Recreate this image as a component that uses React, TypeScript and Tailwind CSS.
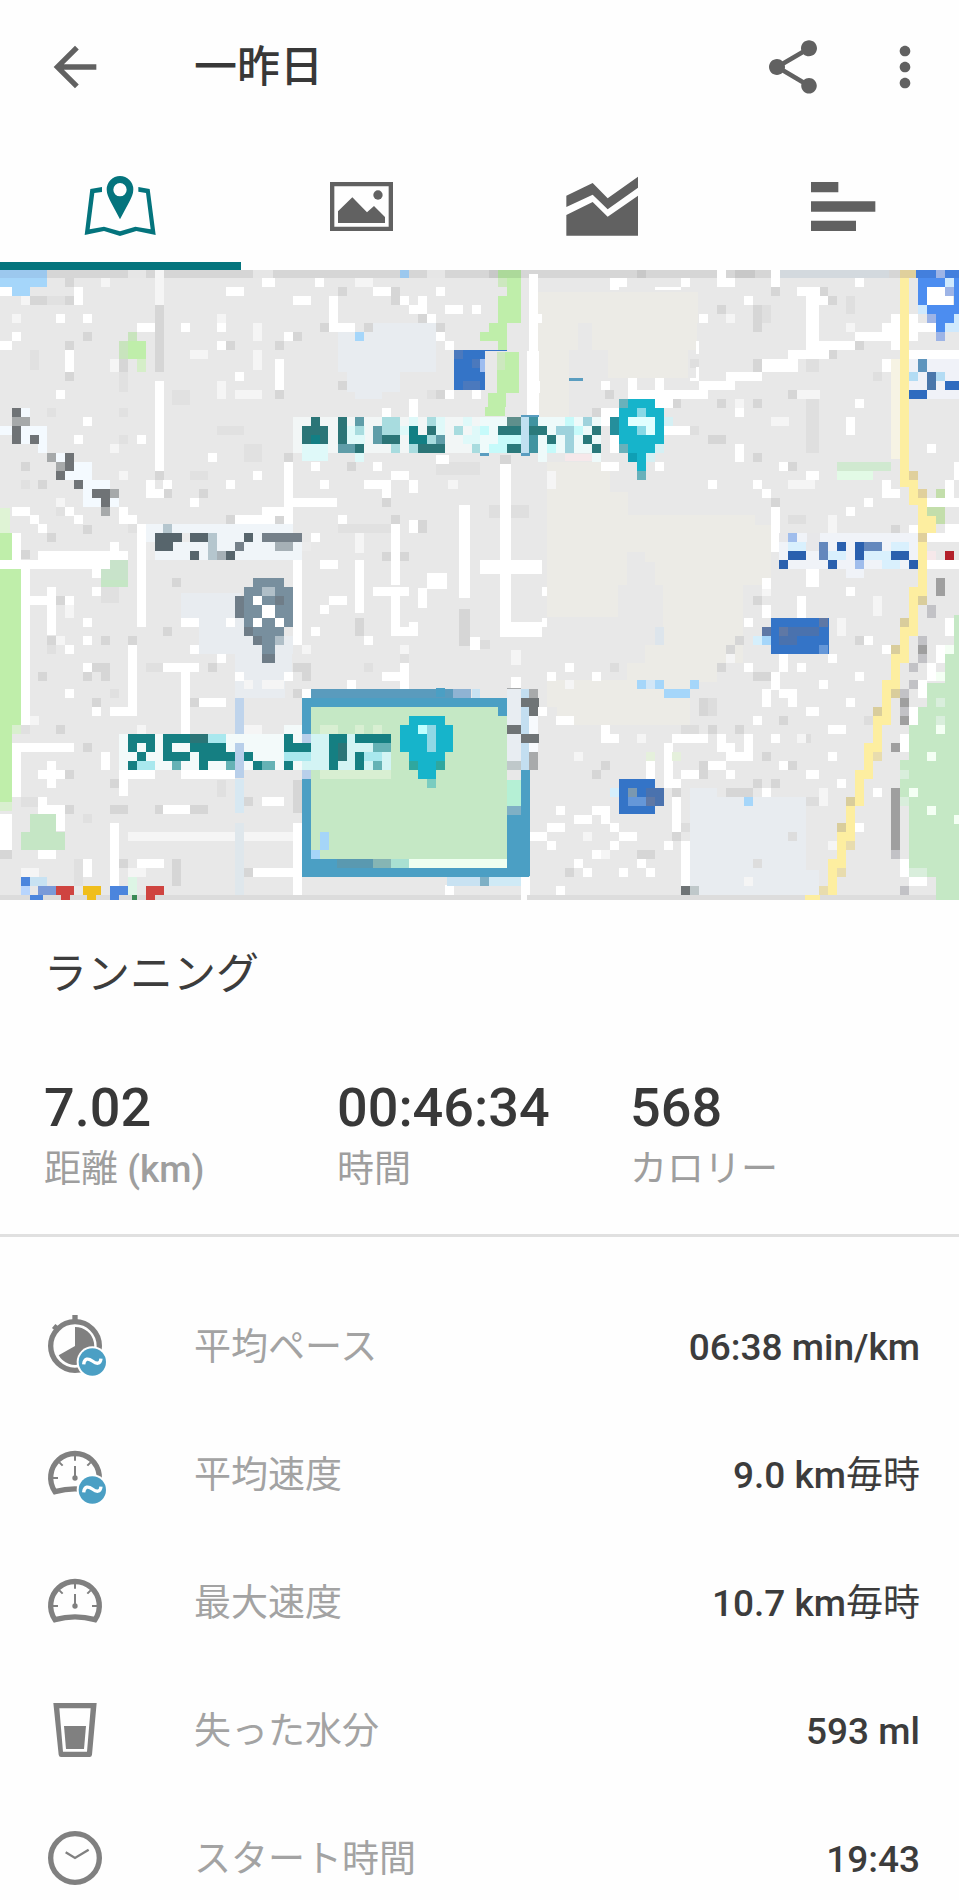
import { useState } from "react";
import type { ReactNode } from "react";
import { MdArrowBack, MdMoreVert, MdShare } from "react-icons/md";

type Layer = [fill: string, cells: string];

interface Tile {
  x: number;
  y: number;
  layers: Layer[];
}

// Each cell is "x,y[,width[,height]]" inside its tile, the size defaults to one 27 unit block.
const tiles: Tile[] = [
  {
    x: 0,
    y: -15,
    layers: [
      ["#e8ecf0", "1013,201,295,121 1120,175,190 1040,322,160,60 1066,376,80"],
      ["#e1e1e1", "142,94,54 89,255,27,60 357,322,27,60 517,376,54,45 651,483,80 571,617,54 732,537,54,54 1013,778,160 1308,590,132,40 142,430 357,430 357,510 1281,376 168,725 62,644 384,778"],
      ["#d6d6d6", "0,15,1440,25 195,94 62,94,80 249,201 465,121,27,201 195,228 195,322 357,282,27,40 825,228 825,376 878,201 678,228 959,175 1093,175 1174,67,27,54 1254,148 1308,175 1013,67 1013,349 1308,376 62,590 115,644 465,617 490,671 598,671 852,564 678,751 825,751 1040,590 1147,698 1174,751 1254,765,27,40 1147,860 1200,860 249,779 142,805 62,856 517,940 195,40"],
      ["#e6e6e6", "385,15,52,25 760,15,60,25 1281,15,54,25"],
      ["#f5f5f5", "35,148 303,40 330,282,27,40 758,175,27,54 758,255,27,60 571,255,54 651,349,27,54 705,376,80 357,617 330,537 1066,40,54 465,15,27,105 651,148 1345,644,30 168,698 1066,805,27,60 62,94"],
      ["#ffffff", "0,67,35 222,67,27,54 678,67,54 786,40,40 168,148 249,148 35,201 0,228,35 195,255,27,67 410,175,54 544,175 651,175 651,228 852,201 825,282,27,94 705,322 168,376 465,349,27,268 249,456 222,510 410,510 625,564 758,617 678,644 437,644,27,54 437,671,54 490,644 571,698 986,94,27,81 986,175,80 878,94,54 946,40 1120,67,54 1200,94 1254,94,27,54 1227,121,54 1281,148 1308,67 1335,121,54 1415,121 1308,201 1335,228 1415,376 1335,376 1227,403,27,54 1147,430"],
      ["#ffffff", "35,725 62,725 89,751 115,778 195,725 222,751 357,725 357,751,54 785,725,95 705,751,120 411,778,467 852,590,27,190 880,698,130 932,590 1120,590 959,644 1093,644,80 1147,671 1174,617,54 1227,644,27,40 1013,751 1227,765,27,40 1174,778,27,182 1376,720,34,240 1066,885,27,75 1281,925,60 878,885,27,75 932,805 959,885,54 1308,570,40"],
      ["#ffffff", "0,885,385 115,858,270 330,832 35,805,27,80 62,912,27,48 411,778,27,182 276,912"],
      ["#a5d6fa", "0,40,142 35,67,54 1066,201"],
      ["#9cc8ee", "0,15,142,25 1200,15,27,25"],
      ["#bfeeaa", "384,228,54,54 0,805,35,80 0,912,62,48"],
      ["#dff3d5", "0,730,30,75"],
      ["#c8e4bd", "384,201 357,228,27,54"],
      ["#d5eec8", "410,282,27,40"],
      ["#c8e3ca", "330,885,54,75 303,912,27,48"],
      ["#3474c7", "1362,255,78,121"],
      ["#4b79bd", "1362,255 1388,349,54 1415,282"],
      ["#f4faff", "62,430 62,483,80,54 0,483,35 115,537 168,564 195,617,80 222,590,54,54 249,644,80 249,671,27,54 276,698 330,698"],
      ["#6f7376", "35,430 35,483,27,54 89,510 195,564,27,54 168,617 222,644 276,671,54 303,698"],
      ["#a6a9aa", "35,456,54 142,564 168,590 330,671 303,725"],
      ["#f2f6f6", "878,456,562,108"],
      ["#dff9f9", "905,537,80,50 1040,483,54,54 1200,483 1227,456 1308,456,27,54 1388,456 1415,483 1388,510,52 1066,564"],
      ["#a8dcdf", "1147,456,54,54 1066,483 1281,510 1227,537 1362,483 1415,537 1281,456 1174,537"],
      ["#5f9da8", "1013,537,54 1120,483,27,54 1308,510 1066,456"],
      ["#2b7577", "905,483,80,54 932,456 1013,456,27,81 1066,537 1147,510,54 1254,510,27,54 1281,483 1281,537,54"],
      ["#127f84", "932,510 1227,483,27,54 1254,510"],
      ["#f0f5f9", "437,778,441 437,805,468,81"],
      ["#ebebeb", "437,832,27,54 545,805,27 905,832"],
      ["#57656c", "465,805,80 465,832,54 571,805,54 571,858 678,858 732,805"],
      ["#758089", "785,805,120 705,832"],
      ["#a6b0b6", "825,832,54 651,858"],
      ["#b5c6ce", "624,805,27,80 490,778"],
      ["#788f9e", "758,938,95,22"],
    ],
  },
  {
    x: 1440,
    y: -15,
    layers: [
      ["#ecebe6", "174,80,480,95 174,175,120,80 174,255,94,200 335,175,315,80 385,255,240,85 200,590,190,160 390,680,54,70 200,750,625,210 825,779,47,181"],
      ["#e8e8e8", "440,860,54,100 494,890,30,70"],
      ["#dfdfdf", "978,403,40,160 28,720,120,40 845,121,27,54 1099,94,27,54 978,282,40,40 925,751,54 551,456,27 630,483,27 1180,322 630,282"],
      ["#d6d6d6", "0,15,1437,25 818,282,27,40 818,121,27,81 711,121 872,67 1018,67 1045,94 1045,255 1126,228 577,403 711,403 684,510,54 818,403 925,376 818,564 925,590 60,570,32 872,698 1233,779 335,430 376,376 60,740,32"],
      ["#c8c8c8", "28,15,27,25 470,15,27,25 765,15,60,25"],
      ["#d3d9de", "898,15,330,25"],
      ["#f5f5f5", "952,376,67 925,644,80 738,148 765,403 202,617,27,54 872,456,54 1045,751,27,54 1394,698 1099,175"],
      ["#f6f3e4", "1233,282,27,300"],
      ["#ffffff", "148,28,27,230 175,148,10 142,258,34,192 175,349,4,35 390,40,27,35 417,40,25 524,67,80,8 604,40 711,15,27,52 738,40 872,15,27,50 792,94 657,148 952,67,67 978,94,40,161 1018,94 1126,40 577,376,108 657,349,108 738,322,108 845,282,108,40 925,255,122 1018,228,108 1126,201,110 1206,175,50 1233,148,27,107 1286,148,27,80 1313,175,54 1286,255,151 647,228,10,40 647,305,10,43 630,340,27,8"],
      ["#ffffff", "444,340,27,36 524,340,27,36 362,349 444,376,80 524,376,54,54 362,430,54,54 390,510,27,54 1206,282,27,40 765,430 551,483,80 765,537,27,54 1099,456,27,54 1126,403 898,590 1340,537 1421,590,16,54 684,644 818,644 845,671 872,725,27,135 978,617,40 1206,644,27,54 1233,671 1153,698 1099,725 60,598,32,362 0,886,186,40 845,938 978,910,40,50 362,590,54 444,564 524,590 1394,644,27,54 1340,698,97 1286,779 1340,805,97,27 1340,885,97 1394,778,43"],
      ["#cde8bf", "55,40,27,27 50,262,27,54"],
      ["#acd99a", "55,15,67,25"],
      ["#bfeeaa", "82,40,40,135 55,94,27,81 28,175,54 0,201,82 55,228 76,262,40,123 50,316,27,70 23,385,54,40 15,425,60"],
      ["#3474c7", "0,255,15,121 0,255,80,3"],
      ["#9dbdf0", "0,282,15,40"],
      ["#5a9dc0", "267,338,42,11"],
      ["#fdeea0", "1260,15,27,650 1286,644,27,75 1313,698,27,108 1340,751,27,54 1313,832,27,128"],
      ["#e0d09c", "1286,617 1313,671 1313,805 1260,15,50,25"],
      ["#4c8df0", "1313,40,124 1313,67,27,54 1421,67,16,54 1340,121,97 1367,148,54 1367,175"],
      ["#437fdd", "1308,15,129,25"],
      ["#ffffff", "1340,67,80,54"],
      ["#cfe9fd", "1394,40 1313,121 1394,175,43 1421,148,16"],
      ["#9db4e6", "1394,67 1340,148 1367,201 1367,15,27,25"],
      ["#f0f2f8", "1286,282,151,94 1340,376,97"],
      ["#b3dcf4", "1286,322 1367,322"],
      ["#5f95bd", "1313,282,27,40"],
      ["#4a77ab", "1340,322,27,54"],
      ["#2e6bbf", "1394,349,43 1286,376,54"],
      ["#d0e9d0", "1072,590,161"],
      ["#e2fae6", "1072,617,108"],
      ["#c3deab", "1340,725,54 1367,671 1367,751"],
      ["#eefafa", "0,456,362,108 174,564,28 335,564"],
      ["#c6fafa", "55,510,67 28,537,54 0,483 256,456 283,483 202,537,27"],
      ["#c0e0f0", "122,456,27,108"],
      ["#9ed2dc", "229,483 256,483 256,510,27,54 308,456"],
      ["#5a9dc0", "0,564,28,10 122,564,27,10 122,450,54,6"],
      ["#5f8f8c", "82,456,40"],
      ["#4093a0", "148,456,27,27 148,510,27,54"],
      ["#2a797b", "55,483,67 82,537,40 148,483,54 200,510 335,483 308,510 335,537"],
      ["#d5f0f4", "551,456 497,564 524,537"],
      ["#69b1bb", "417,403 417,537 471,617"],
      ["#258f9c", "390,456,27,54"],
      ["#16b4cb", "444,403,80 417,430,134,107 444,537,80 471,564,27,54"],
      ["#0f9fb5", "444,564"],
      ["#88d9e6", "471,430 471,483"],
      ["#e0ffff", "444,456,80 497,483"],
      ["#f0f3f8", "898,805,415,108 1099,913,54 1180,805,54"],
      ["#e7e7e9", "979,832,40 980,805,40,27 898,805,27"],
      ["#d9f0fd", "925,832,54 1045,858,54 1153,858,80 1233,832,54 1206,885,54"],
      ["#a0bdec", "925,805 1126,885"],
      ["#6488bd", "1018,832,27,54 1153,832,54"],
      ["#2a60ae", "925,858,54 898,885 1045,885 1072,832 1126,832,27,54 1233,858,54 1286,885"],
      ["#f6e8ea", "1340,858 256,567,80,20"],
      ["#b3202a", "1394,858"],
      ["#9f9f9f", "1367,938"],
    ],
  },
  {
    x: 0,
    y: 930,
    layers: [
      ["#e8ecf0", "544,40,180,74 598,114,135,54 598,168,280,54 705,222,170,53 705,275,150,80"],
      ["#e0e0e0", "303,20,54,50 437,248,54 330,328 142,195 62,435 62,650,80,30 249,702 384,328 598,515 651,600,27,50 222,837,27,80 1200,222 1093,248"],
      ["#d6d6d6", "249,275 276,248,54 303,168 142,168 115,275 168,47 384,168 490,140 303,275 878,248,54 905,275 878,328 276,355 249,490 195,570 330,675,54 464,675 195,675 571,675,54 732,650 330,598 0,810,35 357,837 517,837,27,80 705,864,54 1066,114,27,54 1376,87,34,110 571,355 625,248 168,435 878,600,27,100"],
      ["#f5f5f5", "195,74,27,40 89,408 411,435 732,435,54 410,490 384,755,494 384,864,54 785,301,67 62,864,54 1200,195 905,195 168,168 732,301"],
      ["#ffffff", "62,0,27,435 89,47,54 142,20,27,145 410,0,27,140 276,20 195,47 249,114 249,168 195,195 249,248 195,328 384,195,27,212 330,380,80 276,380 490,248,107 544,275,27,187 598,355,80 571,195 651,222 705,275 678,114 544,114,54 852,275 878,0,27,195 905,328 1066,0,27,100 1120,20,108 1174,20,27,147 1174,140,80 1227,127 1254,25,27,60 1281,0,60 1376,0,34,55 986,47,54 959,74 932,140 1093,168 1200,248,27,80 1147,275,54 1040,301 1410,170,30,40"],
      ["#ffffff", "62,490,160 35,490,27,160 357,462,27,187 142,544,27,80 115,570,80 303,515,27,54 115,650 115,675,80 168,700,27,54 0,702,35,108 330,730,27,230 490,675,80 785,650,67 411,837,80 249,837,27,54 878,730,27,230 758,864,120 1335,915,27,30 115,810,54 544,569,160 384,569,80"],
      ["#bfeeaa", "0,0,62,435 0,435,35,230"],
      ["#d9efcf", "0,665,35 35,435"],
      ["#c5e6c5", "89,702,80,54 62,756,133,54 303,0,80,20"],
      ["#bfd4ec", "705,355,27,107"],
      ["#d7e8f2", "705,598,27,102"],
      ["#dfe7ec", "705,730,27,215"],
      ["#788f9e", "758,0,94,20 732,20,147,120 732,140,120 758,167,67 785,194,40,52"],
      ["#6f7d88", "705,47,27,67 732,140 758,167 785,222,40 825,47"],
      ["#b0bfc8", "785,20,40 825,168"],
      ["#ffffff", "758,47 785,74,40,40 758,114 825,114"],
      ["#5a9bbd", "932,328,428"],
      ["#8fb3d3", "1360,328,54"],
      ["#c8e2f2", "1415,328,25 1340,890,100 80,890,60"],
      ["#c5e8c5", "932,382,508,455"],
      ["#4b9fc4", "905,355,535 905,380,27,510 932,837,80 905,864,535 1308,325"],
      ["#5a99b0", "1012,837,108"],
      ["#86b5b4", "1120,837,54"],
      ["#a9e0d2", "1174,837,54"],
      ["#effff0", "1227,837,213"],
      ["#a5d5f8", "959,757,27,54 932,810"],
      ["#f3fafa", "357,462,548,107 852,435,53"],
      ["#d3f4f4", "905,462,268,107"],
      ["#d8efd2", "959,435,54 1066,435 1120,435 959,569,214"],
      ["#a9e8ee", "625,462,54 410,542,54 852,515,80 1093,515,54"],
      ["#b8cfea", "705,489,27,105 905,569 905,462"],
      ["#65b2b5", "678,542,27 785,542,40 517,515,27,54 1120,489,54 1120,542"],
      ["#157f82", "384,462,80 384,489 437,489 410,515 384,542 490,462,27,80 517,462,54 517,515,54,27 571,489,27,27 598,489,27,80 625,489,54 625,515,80 732,515 758,542 852,462 852,489,80 852,542 986,462,54,54 986,515,27,54 1066,462,107 1066,515,27,54"],
      ["#2b7577", "571,462,54 1013,489,27,54"],
      ["#16b4cb", "1227,408,107 1200,435,160,80 1227,515,107 1254,542,54,54"],
      ["#2fa79f", "1227,542 1308,542"],
      ["#7accc0", "1281,596"],
      ["#c0ffff", "1254,435"],
      ["#90d8e5", "1281,435,27,80"],
      ["#dcdcdc", "0,945,1440,15"],
      ["#ddf5e5", "384,890,27,54"],
      ["#4b85dd", "62,890 330,917,54 89,945,40,14 330,945,27,14"],
      ["#b8d5fd", "62,917"],
      ["#7a9ad8", "115,917,54"],
      ["#cf4440", "168,917,54 182,944,27,15 437,917,54 437,944,27,15"],
      ["#f0be1c", "249,917,54 262,944,27,15"],
      ["#3a8a55", "397,944,13,15"],
    ],
  },
  {
    x: 1440,
    y: 930,
    layers: [
      ["#ecebe6", "200,0,215,110 550,0,240,250 494,195,216,110 440,250,270,50 200,300,430,80 230,380,400,54"],
      ["#e8ecf0", "630,623,80 630,650,348,295 978,870,40,75"],
      ["#dddddd", "684,355,27,54 0,180,30 604,435,54,30 965,462 470,462 604,730 925,757 818,837 978,650,40 1153,408 390,248 0,945,1437,15"],
      ["#d6d6d6", "765,168 738,195 711,248 818,275,54 818,47 898,408 657,355,27,54 765,435 845,515 657,542,27,54 362,542 335,569 738,623,80 872,596 577,757 470,810,54 256,864 1126,168 818,596 684,435 925,542 577,623"],
      ["#f5f5f5", "92,210,32,45 1180,47,27,60 256,301 282,515 1072,114,27,54 738,222 470,462 1018,623,27,54 792,890 308,757 1045,784 362,810 952,462 845,20"],
      ["#ffffff", "60,0,32,170 92,127,95,43 186,20,15 186,114,15 845,0 845,74,27,40 952,47,27,67 1099,20 978,0,40,20 792,114 1153,168 1206,195 1045,222 898,222,27,54 952,248 792,248 872,275,27,54 1126,275 1018,301 845,328,27,54 898,328,54 925,355 1099,355 978,382,40 818,408 792,462,27,54 872,462 1045,435,54 256,248 202,275 335,275 229,408,54 362,435 362,462,54 577,462,108 551,489,27,135 577,596 604,569,54 711,462,27,54 738,489,27,54 765,515,54 684,542,54 738,569 898,542 978,569,40 1045,515 1072,596 845,623 92,290,32,36"],
      ["#ffffff", "577,650,27,107 604,784,27,133 229,677 335,677,54 282,704,54 362,704 202,730,54 148,757,54 202,784 390,730 417,757,54 390,784 551,784 335,810 282,837 308,864 470,837 497,864 417,864 229,917 122,890,27,54 1126,730 497,542,27,54 1180,623 1394,114,27,54 1367,195,27,54 1340,248,27,54 1313,301,27,54 1286,382,27,54 1260,462,27,54 1260,837,27,54 1286,890,54 148,382,54 122,945,20,15"],
      ["#c5e8c5", "1421,105,16,120 1394,222,43,90 1340,310,97,74 1313,382,124,54 1286,435,151,105 1260,540,27,110 1286,540,151,325 1340,864,97,27 1367,890,70,70"],
      ["#d9eedc", "1367,355 1367,408 1286,864,54 1260,650 1260,569"],
      ["#f4fff4", "1367,435 1340,515 1286,623 1340,677 1421,704,16 1367,275 1394,195"],
      ["#e5f0dc", "497,515 577,515"],
      ["#fdeea0", "1313,0,27,47 1286,20,27,148 1260,141,27,107 1233,222,27,107 1206,301,27,135 1180,408,27,108 1153,489,27,108 1126,569,27,108 1099,677,27,108 1072,757,27,108 1045,837,27,108 1018,917,54 975,944,45,15"],
      ["#d9cd9c", "1313,47 1260,114 1233,195 1233,328 1180,382 1099,650 1072,730"],
      ["#e8dcae", "1180,515 1099,784 1072,864 1018,917"],
      ["#fdeea0", "1126,569,54 1126,650 1286,47"],
      ["#9f9f9f", "1367,0,27,47 1313,195 1260,355 1260,408 1233,489 1233,623,27,187"],
      ["#c2c2c6", "1340,74,27,40 1313,168 1313,222 1286,248 1286,301 1260,328 1260,382 1233,810 1260,917"],
      ["#3474c7", "872,114,174,107 417,596,107,107"],
      ["#4a72ae", "898,141,120 898,168,54 524,623,27,54 497,623"],
      ["#5f78a5", "898,141 1018,114 497,650 845,141"],
      ["#7a98b0", "444,623"],
      ["#6597d8", "1018,195 444,650,54"],
      ["#d5effc", "818,168 390,623"],
      ["#a5d6fa", "845,168 470,301 524,301 630,301 551,328,80 792,650"],
      ["#d2e6f6", "497,301"],
      ["#dde5ec", "524,141,27,54"],
      ["#c5e8c5", "0,382,82,455"],
      ["#effff0", "0,837,82"],
      ["#e8edf2", "82,328,40,241"],
      ["#c3def0", "122,328,27,241"],
      ["#f7fafd", "148,408,27,54 148,489"],
      ["#4b9fc4", "0,355,80 55,382 122,569,27,320 82,704,40,186 0,864,148"],
      ["#b5f0d5", "82,600,40,77"],
      ["#7fb0c5", "82,677,40 0,890,28"],
      ["#cfeaf6", "28,890,94"],
      ["#6f7476", "122,355,54 148,382 82,435,40 122,462,54 604,917"],
      ["#a8aaab", "148,328 148,515,27,54 82,325,40,3"],
      ["#bfc8ca", "630,917 82,542,40"],
    ],
  },
];

function toPath(cells: string) {
  return cells
    .split(" ")
    .map((cell) => {
      const [x, y, w = 27, h = 27] = cell.split(",").map(Number);
      return `M${x} ${y}h${w}v${h}h${-w}z`;
    })
    .join("");
}

function RouteMap() {
  return (
    <svg
      viewBox="0 0 2877 1889"
      shapeRendering="crispEdges"
      role="img"
      aria-label="Map"
      className="block h-auto w-full bg-[#e8e8e8]"
    >
      {tiles.map((tile) => (
        <g key={`${tile.x}:${tile.y}`} transform={`translate(${tile.x} ${tile.y})`}>
          {tile.layers.map(([fill, cells], i) => (
            <path key={i} fill={fill} d={toPath(cells)} />
          ))}
        </g>
      ))}
    </svg>
  );
}

const tabs: { id: string; icon: ReactNode }[] = [
  {
    id: "Map",
    icon: (
      <svg viewBox="253 528 216 180" className="h-[60px] w-[72px]" fill="currentColor">
        <path d="M307 561 272 567 255 705 313 693 361 708 410 693 468 705 450 567 416 561v14l23 4 14 109-46-8-46 14-48-14-43 8 14-109 23-3z" />
        <path
          fillRule="evenodd"
          d="M361 528a40 40 0 0 0-40 40c0 14 6 26 12 37l28 53 28-53c6-11 12-23 12-37a40 40 0 0 0-40-40zm0 21a20 20 0 1 1 0 40 20 20 0 0 1 0-40z"
        />
      </svg>
    ),
  },
  {
    id: "Photos",
    icon: (
      <svg viewBox="990 545 189 147" className="h-[49px] w-[63px]" fill="currentColor">
        <path fillRule="evenodd" d="M990 545h189v147H990zm13 13v121h163V558z" />
        <path d="M1014 633 1057 591 1101 636 1122 617 1155 650V668H1014z" />
        <circle cx="1134" cy="584" r="14" />
      </svg>
    ),
  },
  {
    id: "Charts",
    icon: (
      <svg viewBox="260 528 216 180" className="h-[60px] w-[72px]" fill="currentColor">
        <path d="M261 587 340 549 385 595 476 530V563L385 628 340 584 261 621z" />
        <path d="M261 645 340 606 385 650 476 587V707H261z" />
      </svg>
    ),
  },
  {
    id: "Splits",
    icon: (
      <svg viewBox="995 545 195 147" className="h-[49px] w-[65px]" fill="currentColor">
        <path d="M995 545h82v31h-82zM995 603h193v31H995zM995 661h135v31H995z" />
      </svg>
    ),
  },
];

function AverageBadge() {
  return (
    <>
      <circle cx="52" cy="48" r="47" fill="#fff" stroke="none" />
      <circle cx="52" cy="48" r="41" fill="#4b9fc4" stroke="none" />
      <path d="M26 55C28 36 40 36 52 45S76 56 78 38" stroke="#fff" strokeWidth="10" />
    </>
  );
}

function RowIcon({ children }: { children: ReactNode }) {
  return (
    <svg
      viewBox="-96 -96 192 192"
      fill="none"
      stroke="#808080"
      strokeWidth="16"
      className="h-16 w-16 shrink-0"
      aria-hidden="true"
    >
      {children}
    </svg>
  );
}

function Gauge() {
  return (
    <>
      <path d="M-60 53A73 73 0 1 1 60 53Q0 36-60 53z" />
      <path
        strokeWidth="6"
        d="M0-56V-40M-66 12H-51M66 12H51M-47-35-37-25M47-35 37-25M0-24V12"
      />
      <circle cx="0" cy="12" r="8" fill="#808080" stroke="none" />
    </>
  );
}

interface Stat {
  value: string;
  label: string;
  unit?: string;
}

const stats: Stat[] = [
  { value: "7.02", label: "距離", unit: "(km)" },
  { value: "00:46:34", label: "時間" },
  { value: "568", label: "カロリー" },
];

interface Detail {
  label: string;
  value: string;
  suffix?: string;
  icon: ReactNode;
}

const details: Detail[] = [
  {
    label: "平均ペース",
    value: "06:38 min/km",
    icon: (
      <>
        <circle r="73" />
        <path d="M0-93V-74M-64-60-52-50" />
        <path fill="#808080" stroke="none" d="M0 0V-57A57 57 0 1 1-49 28z" />
        <AverageBadge />
      </>
    ),
  },
  {
    label: "平均速度",
    value: "9.0 km",
    suffix: "毎時",
    icon: (
      <>
        <Gauge />
        <AverageBadge />
      </>
    ),
  },
  { label: "最大速度", value: "10.7 km", suffix: "毎時", icon: <Gauge /> },
  {
    label: "失った水分",
    value: "593 ml",
    icon: (
      <g fill="#808080" stroke="none">
        <path
          fillRule="evenodd"
          d="M-65-81H65L51 74Q50 81 44 81H-42Q-48 81-49 74zM-47-65-36 65H36L47-65z"
        />
        <path d="M-33-12H33L27 57H-27z" />
      </g>
    ),
  },
  {
    label: "スタート時間",
    value: "19:43",
    icon: (
      <>
        <circle r="73" />
        <path strokeWidth="7" d="M-28-17 0 0 41-25" />
      </>
    ),
  },
];

export default function App() {
  const [active, setActive] = useState("Map");

  return (
    <main
      lang="ja"
      className="min-h-screen overflow-x-hidden bg-[#fefefe] font-[Roboto,'Noto_Sans_CJK_JP',sans-serif] text-[#3c3c3c]"
    >
      <header className="flex h-[134px] items-center pr-[22px] pl-[43px] text-[#616161]">
        <button type="button" aria-label="Back">
          <MdArrowBack size={64} />
        </button>
        <h1 className="ml-[87px] flex-1 text-[43px] leading-16 font-medium text-[#383838]">一昨日</h1>
        <button type="button" aria-label="Share">
          <MdShare size={64} />
        </button>
        <button type="button" aria-label="More" className="ml-12">
          <MdMoreVert size={64} />
        </button>
      </header>

      {/* The strip runs slightly past the right edge */}
      <nav role="tablist" className="grid h-[136px] w-[100.5%] grid-cols-4">
        {tabs.map((tab) => (
          <button
            key={tab.id}
            type="button"
            role="tab"
            aria-label={tab.id}
            aria-selected={active === tab.id}
            onClick={() => setActive(tab.id)}
            className={`flex items-center justify-center border-b-8 pt-4 ${
              active === tab.id ? "border-[#04747d] text-[#04747d]" : "border-transparent text-[#616161]"
            }`}
          >
            {tab.icon}
          </button>
        ))}
      </nav>

      <RouteMap />

      <section className="border-b-3 border-[#e0e0e0] pt-[42px] pr-9 pb-9 pl-11">
        <h2 className="text-[43px] leading-16">ランニング</h2>
        <dl className="mt-[70px] grid grid-cols-3">
          {stats.map((stat) => (
            <div key={stat.label} className="flex flex-col-reverse">
              <dt className="pt-0.5 text-[37px] leading-14 text-[#9e9e9e]">
                {stat.label}
                {stat.unit && <span className="font-medium"> {stat.unit}</span>}
              </dt>
              <dd className="text-[54px] leading-16 font-medium text-[#383838]">{stat.value}</dd>
            </div>
          ))}
        </dl>
      </section>

      <dl className="flex flex-col gap-12 pt-[69px] pr-[39px] pl-[43px]">
        {details.map((row) => (
          <div key={row.label} className="flex h-20 items-center text-[37px]">
            <RowIcon>{row.icon}</RowIcon>
            <dt className="ml-[87px] flex-1 pt-1 text-[#a3a3a3]">{row.label}</dt>
            <dd className="pt-1 font-medium">
              {row.value}
              {row.suffix && <span className="font-normal">{row.suffix}</span>}
            </dd>
          </div>
        ))}
      </dl>
    </main>
  );
}
